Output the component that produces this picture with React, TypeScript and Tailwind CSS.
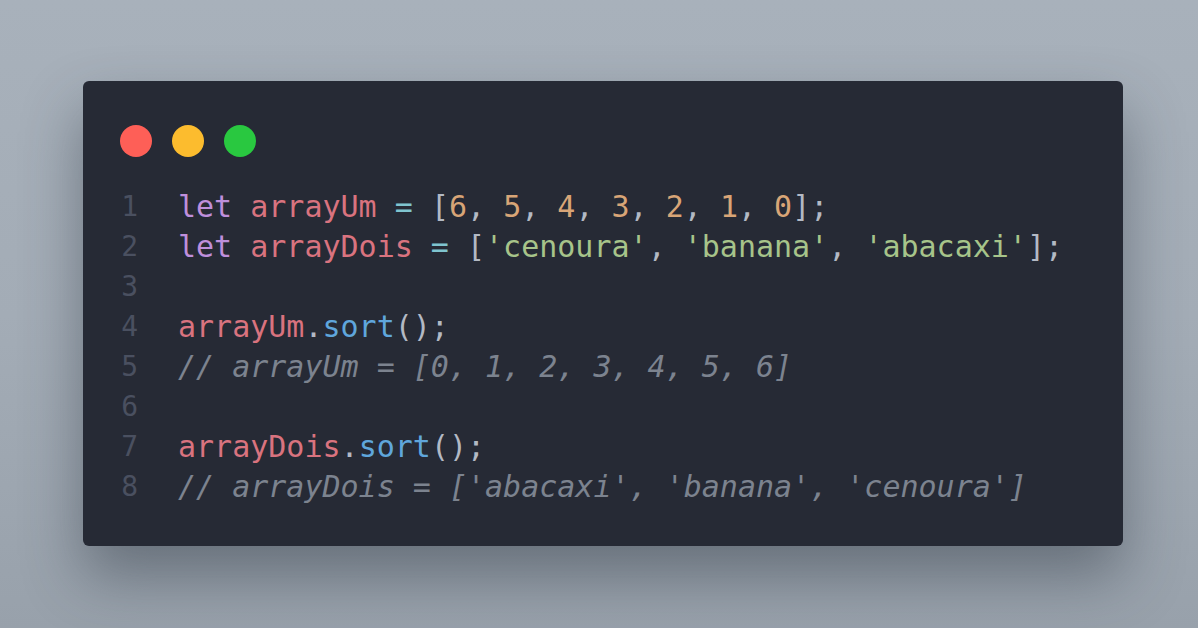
import React from "react";

type Tok = [string, string];

const C = {
  kw: "text-[#bf8fdc]",
  v: "text-[#d9737f]",
  op: "text-[#7fc4cf]",
  p: "text-[#b3b9c4]",
  n: "text-[#d8a577]",
  s: "text-[#a7c48a]",
  f: "text-[#5fa6dc]",
  c: "text-[#7c838f] italic",
};

const lines: Tok[][] = [
  [
    ["let ", C.kw],
    ["arrayUm", C.v],
    [" = ", C.op],
    ["[", C.p],
    ["6", C.n], [", ", C.p], ["5", C.n], [", ", C.p], ["4", C.n], [", ", C.p],
    ["3", C.n], [", ", C.p], ["2", C.n], [", ", C.p], ["1", C.n], [", ", C.p],
    ["0", C.n],
    ["];", C.p],
  ],
  [
    ["let ", C.kw],
    ["arrayDois", C.v],
    [" = ", C.op],
    ["[", C.p],
    ["'cenoura'", C.s], [", ", C.p],
    ["'banana'", C.s], [", ", C.p],
    ["'abacaxi'", C.s],
    ["];", C.p],
  ],
  [],
  [
    ["arrayUm", C.v],
    [".", C.p],
    ["sort", C.f],
    ["();", C.p],
  ],
  [["// arrayUm = [0, 1, 2, 3, 4, 5, 6]", C.c]],
  [],
  [
    ["arrayDois", C.v],
    [".", C.p],
    ["sort", C.f],
    ["();", C.p],
  ],
  [["// arrayDois = ['abacaxi', 'banana', 'cenoura']", C.c]],
];

export default function App() {
  return (
    <div className="w-[1198px] h-[628px] overflow-hidden bg-gradient-to-b from-[#a8b1bb] via-[#a3acb6] to-[#98a1ab] pt-[81px] pl-[83px]">
      <div className="w-[1040px] h-[465px] rounded-[6px] bg-[#262a35] pt-[44px] pl-[37px] shadow-[0_30px_60px_rgba(40,48,60,0.45)]">
        {/* window dots */}
        <div className="flex gap-[20px]">
          <span className="w-[32px] h-[32px] rounded-full bg-[#fe5f57]" />
          <span className="w-[32px] h-[32px] rounded-full bg-[#fcbc2e]" />
          <span className="w-[32px] h-[32px] rounded-full bg-[#29c840]" />
        </div>

        {/* code */}
        <div className="mt-[30px] text-[30px] leading-[40px] whitespace-pre font-['DejaVu_Sans_Mono','Liberation_Mono',monospace]">
          {lines.map((toks, i) => (
            <div key={i} className="flex h-[40px]">
              <span className="w-[18px] text-right text-[#4a5060] text-[28px]">{i + 1}</span>
              <span className="ml-[40px]">
                {toks.map(([t, cls], j) => (
                  <span key={j} className={cls}>
                    {t}
                  </span>
                ))}
              </span>
            </div>
          ))}
        </div>
      </div>
    </div>
  );
}
